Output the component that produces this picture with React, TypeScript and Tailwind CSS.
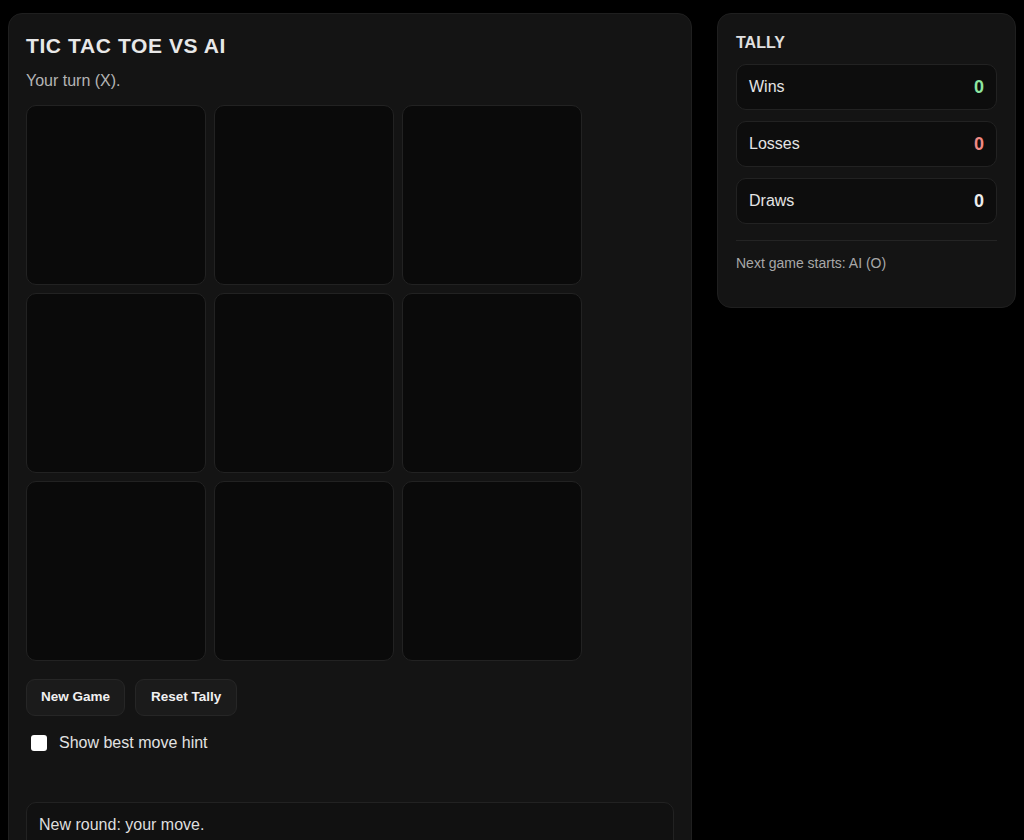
const cells = Array.from({ length: 9 }, (_, i) => i);

const tally = [
  { label: "Wins", value: 0, color: "text-[#8ee6a0]" },
  { label: "Losses", value: 0, color: "text-[#f08a84]" },
  { label: "Draws", value: 0, color: "text-[#ececec]" },
];

export default function App() {
  return (
    <main
      className="flex h-[840px] items-start gap-[25px] overflow-hidden bg-black px-2 pt-[13px] text-[#e6e6e6]"
      style={{ fontFamily: '"Liberation Sans", Arial, sans-serif' }}
    >
      <section className="h-[860px] w-[684px] shrink-0 rounded-[14px] border border-[#1f1f1f] bg-[#141414] px-[17px] pt-[19px]">
        <h1 className="text-[21px] font-bold leading-[26px] tracking-[0.6px] text-[#e8e8e8]">
          TIC TAC TOE VS AI
        </h1>
        <p className="mt-[12px] text-[16px] leading-[20px] text-[#b4b4b4]">Your turn (X).</p>

        <div className="mt-[14px] grid w-[556px] grid-cols-3 gap-[8px]">
          {cells.map((c) => (
            <button
              type="button"
              key={c}
              className="h-[180px] rounded-[10px] border border-[#222] bg-[#0a0a0a]"
            />
          ))}
        </div>

        <div className="mt-[18px] flex gap-[10px]">
          <button
            type="button"
            className="h-[37px] rounded-[9px] border border-[#262626] bg-[#1b1b1b] px-[14px] text-[13.5px] font-bold text-[#f0f0f0]"
          >
            New Game
          </button>
          <button
            type="button"
            className="h-[37px] rounded-[9px] border border-[#262626] bg-[#1b1b1b] px-[15px] text-[13.5px] font-bold text-[#f0f0f0]"
          >
            Reset Tally
          </button>
        </div>

        <label className="mt-[17px] flex items-center gap-[12px] pl-[5px]">
          <span className="block h-[16px] w-[16px] rounded-[3px] bg-white" />
          <span className="text-[16px] leading-[20px] text-[#e2e2e2]">Show best move hint</span>
        </label>

        <div className="mt-[49px] h-[60px] w-[648px] rounded-[10px] border border-[#222] bg-[#111] px-[12px] pt-[12px]">
          <p className="text-[16px] leading-[20px] text-[#dedede]">New round: your move.</p>
        </div>
      </section>

      <aside className="w-[299px] shrink-0 rounded-[14px] border border-[#1f1f1f] bg-[#141414] px-[18px] pt-[19px] pb-[35px]">
        <h2 className="text-[16px] font-bold leading-[20px] text-[#e0e0e0]">TALLY</h2>
        <div className="mt-[11px] flex flex-col gap-[11px]">
          {tally.map((t) => (
            <div
              key={t.label}
              className="flex h-[46px] items-center justify-between rounded-[10px] border border-[#222] bg-[#0d0d0d] px-[12px]"
            >
              <span className="text-[16px] text-[#e4e4e4]">{t.label}</span>
              <span className={`text-[18px] font-bold ${t.color}`}>{t.value}</span>
            </div>
          ))}
        </div>
        <div className="mt-[16px] border-t border-[#242424]" />
        <p className="mt-[13px] text-[14px] leading-[18px] text-[#a8a8a8]">Next game starts: AI (O)</p>
      </aside>
    </main>
  );
}
